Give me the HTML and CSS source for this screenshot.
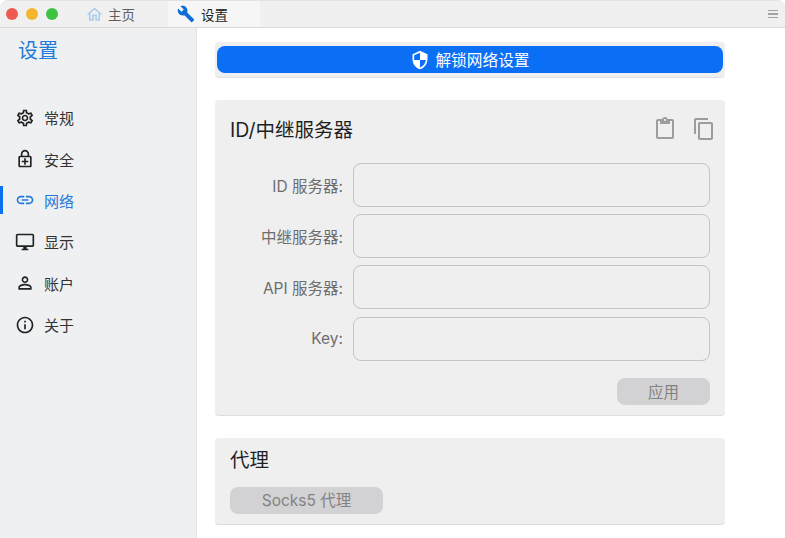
FILE: index.html
```html
<!DOCTYPE html>
<html lang="zh-CN">

<head>
    <meta charset="UTF-8">
    <meta name="viewport" content="width=device-width, initial-scale=1.0">
    <title>设置</title>

    <link rel="stylesheet" href="styles.css">
</head>

<body>

    <header class="titlebar">
        <div class="lights">
            <span class="light red"></span>
            <span class="light yellow"></span>
            <span class="light green"></span>
        </div>
        <div class="tab tab-home">
            <svg class="tab-icon-home" viewBox="0 0 24 24"><path d="M12 5.69l5 4.5V18h-2v-6H9v6H7v-7.81l5-4.5M12 3L2 12h3v8h6v-6h2v6h6v-8h3L12 3z"/></svg>
            主页
        </div>
        <div class="tab tab-active">
            <svg class="tab-icon-tool" viewBox="0 0 24 24"><path d="M22.7 19l-9.1-9.1c.9-2.3.4-5-1.5-6.9-2-2-5-2.4-7.4-1.3L9 6 6 9 1.6 4.7C.4 7.1.9 10.1 2.9 12.1c1.9 1.9 4.6 2.4 6.9 1.5l9.1 9.1c.4.4 1 .4 1.4 0l2.3-2.3c.5-.4.5-1.1.1-1.4z"/></svg>
            设置
        </div>
        <div class="menu">
            <span></span>
            <span></span>
            <span></span>
        </div>
    </header>

    <div class="content">
        <aside class="sidebar">
            <h1>设置</h1>
            <nav>
                <a class="nav-item">
                    <svg viewBox="0 0 24 24"><path d="M19.43 12.98c.04-.32.07-.64.07-.98 0-.34-.03-.66-.07-.98l2.11-1.65c.19-.15.24-.42.12-.64l-2-3.46c-.09-.16-.26-.25-.44-.25-.06 0-.12.01-.17.03l-2.49 1c-.52-.4-1.08-.73-1.69-.98l-.38-2.65C14.46 2.18 14.25 2 14 2h-4c-.25 0-.46.18-.49.42l-.38 2.65c-.61.25-1.17.59-1.69.98l-2.49-1c-.06-.02-.12-.03-.18-.03-.17 0-.34.09-.43.25l-2 3.46c-.13.22-.07.49.12.64l2.11 1.65c-.04.32-.07.65-.07.98 0 .33.03.66.07.98l-2.11 1.65c-.19.15-.24.42-.12.64l2 3.46c.09.16.26.25.44.25.06 0 .12-.01.17-.03l2.49-1c.52.4 1.08.73 1.69.98l.38 2.65c.03.24.24.42.49.42h4c.25 0 .46-.18.49-.42l.38-2.65c.61-.25 1.17-.59 1.69-.98l2.49 1c.06.02.12.03.18.03.17 0 .34-.09.43-.25l2-3.46c.12-.22.07-.49-.12-.64l-2.11-1.65zm-1.98-1.71c.04.31.05.52.05.73 0 .21-.02.43-.05.73l-.14 1.13.89.7 1.08.84-.7 1.21-1.27-.51-1.04-.42-.9.68c-.43.32-.84.56-1.25.73l-1.06.43-.16 1.13-.2 1.35h-1.4l-.19-1.35-.16-1.13-1.06-.43c-.43-.18-.83-.41-1.23-.71l-.91-.7-1.06.43-1.27.51-.7-1.21 1.08-.84.89-.7-.14-1.13c-.03-.31-.05-.54-.05-.74s.02-.43.05-.73l.14-1.13-.89-.7-1.08-.84.7-1.21 1.27.51 1.04.42.9-.68c.43-.32.84-.56 1.25-.73l1.06-.43.16-1.13.2-1.35h1.39l.19 1.35.16 1.13 1.06.43c.43.18.83.41 1.23.71l.91.7 1.06-.43 1.27-.51.7 1.21-1.07.85-.89.7.14 1.13zM12 8c-2.21 0-4 1.79-4 4s1.79 4 4 4 4-1.79 4-4-1.79-4-4-4zm0 6c-1.1 0-2-.9-2-2s.9-2 2-2 2 .9 2 2-.9 2-2 2z"/></svg>
                    常规
                </a>
                <a class="nav-item">
                    <svg viewBox="0 0 24 24"><path d="M18 8h-1V6c0-2.76-2.24-5-5-5S7 3.24 7 6v2H6c-1.1 0-2 .9-2 2v10c0 1.1.9 2 2 2h12c1.1 0 2-.9 2-2V10c0-1.1-.9-2-2-2zM9 6c0-1.66 1.34-3 3-3s3 1.34 3 3v2H9V6zm9 14H6V10h12v10zm-2-4h-3v3h-2v-3H8v-2h3v-3h2v3h3v2z"/></svg>
                    安全
                </a>
                <a class="nav-item active">
                    <svg viewBox="0 0 24 24"><path d="M3.9 12c0-1.71 1.39-3.1 3.1-3.1h4V7H7c-2.76 0-5 2.24-5 5s2.24 5 5 5h4v-1.9H7c-1.71 0-3.1-1.39-3.1-3.1zM8 13h8v-2H8v2zm9-6h-4v1.9h4c1.71 0 3.1 1.39 3.1 3.1s-1.39 3.1-3.1 3.1h-4V17h4c2.76 0 5-2.24 5-5s-2.24-5-5-5z"/></svg>
                    网络
                </a>
                <a class="nav-item">
                    <svg viewBox="0 0 24 24"><path d="M21 2H3c-1.1 0-2 .9-2 2v12c0 1.1.9 2 2 2h7v2H8v2h8v-2h-2v-2h7c1.1 0 2-.9 2-2V4c0-1.1-.9-2-2-2zm0 14H3V4h18v12z"/></svg>
                    显示
                </a>
                <a class="nav-item">
                    <svg viewBox="0 0 24 24"><path d="M12 5.9c1.16 0 2.1.94 2.1 2.1s-.94 2.1-2.1 2.1S9.9 9.16 9.9 8s.94-2.1 2.1-2.1m0 9c2.97 0 6.1 1.46 6.1 2.1v1.1H5.9V17c0-.64 3.13-2.1 6.1-2.1M12 4C9.79 4 8 5.79 8 8s1.79 4 4 4 4-1.79 4-4-1.79-4-4-4zm0 9c-2.67 0-8 1.34-8 4v3h16v-3c0-2.66-5.33-4-8-4z"/></svg>
                    账户
                </a>
                <a class="nav-item">
                    <svg viewBox="0 0 24 24"><path d="M11 7h2v2h-2zm0 4h2v6h-2zm1-9C6.48 2 2 6.48 2 12s4.48 10 10 10 10-4.48 10-10S17.52 2 12 2zm0 18c-4.41 0-8-3.59-8-8s3.59-8 8-8 8 3.59 8 8-3.59 8-8 8z"/></svg>
                    关于
                </a>
            </nav>
        </aside>

        <main class="settings">
            <div class="unlock-wrap">
                <button class="unlock" type="button">
                    <svg viewBox="0 0 24 24"><path d="M12 1L3 5v6c0 5.55 3.84 10.74 9 12 5.16-1.26 9-6.45 9-12V5l-9-4zm0 10.99h7c-.53 4.12-3.28 7.79-7 8.94V12H5V6.3l7-3.11v8.8z"/></svg>
                    解锁网络设置
                </button>
            </div>

            <section class="card card-server">
                <div class="card-head">
                    <h2>ID/中继服务器</h2>
                    <div class="card-tools">
                        <svg viewBox="0 0 24 24"><path d="M19 2h-4.18C14.4.84 13.3 0 12 0c-1.3 0-2.4.84-2.82 2H5c-1.1 0-2 .9-2 2v16c0 1.1.9 2 2 2h14c1.1 0 2-.9 2-2V4c0-1.1-.9-2-2-2zm-7 0c.55 0 1 .45 1 1s-.45 1-1 1-1-.45-1-1 .45-1 1-1zm7 18H5V4h2v3h10V4h2v16z"/></svg>
                        <svg viewBox="0 0 24 24"><path d="M16 1H4c-1.1 0-2 .9-2 2v14h2V3h12V1zm3 4H8c-1.1 0-2 .9-2 2v14c0 1.1.9 2 2 2h11c1.1 0 2-.9 2-2V7c0-1.1-.9-2-2-2zm0 16H8V7h11v14z"/></svg>
                    </div>
                </div>
                <div class="field">
                    <label for="id-server">ID 服务器:</label>
                    <input id="id-server" type="text" disabled>
                </div>
                <div class="field">
                    <label for="relay-server">中继服务器:</label>
                    <input id="relay-server" type="text" disabled>
                </div>
                <div class="field">
                    <label for="api-server">API 服务器:</label>
                    <input id="api-server" type="text" disabled>
                </div>
                <div class="field">
                    <label for="key">Key:</label>
                    <input id="key" type="text" disabled>
                </div>
                <div class="card-foot">
                    <button class="btn-off btn-apply" type="button" disabled>应用</button>
                </div>
            </section>

            <section class="card card-proxy">
                <h2>代理</h2>
                <button class="btn-off btn-socks" type="button" disabled>Socks5 代理</button>
            </section>
        </main>
    </div>

</body>

</html>
```

FILE: styles.css
```css
* {
    box-sizing: border-box;
    margin: 0;
    padding: 0;
}

html,
body {
    height: 100%;
    overflow: hidden;
}

body {
    display: flex;
    flex-direction: column;
    background: white;
    color: #2b2b2b;
    font-family: Inter, "Noto Sans CJK SC", sans-serif;
}

.titlebar {
    flex: none;
    height: 28px;
    display: flex;
    align-items: center;
    background: #f0f0f1;
    border-top: 1px solid #e2e2e2;
    border-bottom: 1px solid #d9d9d9;
    border-radius: 8px 8px 0 0;
    font-size: 13.5px;
}

.lights {
    width: 85px;
    display: flex;
    gap: 8px;
    padding-left: 6px;
}

.light {
    width: 12px;
    height: 12px;
    border-radius: 50%;
}

.red {
    background: #ee5a52;
}

.yellow {
    background: #f6b52e;
}

.green {
    background: #3dc244;
}

.tab {
    height: 100%;
    display: flex;
    align-items: center;
}

.tab-home {
    width: 83px;
    gap: 4px;
    color: #5e5e5e;
}

.tab-icon-home {
    width: 19px;
    height: 19px;
    fill: #a9cdeb;
}

.tab-active {
    width: 92px;
    gap: 6px;
    padding-left: 9px;
    background: #f6f6f7;
    color: #222;
}

.tab-icon-tool {
    width: 18px;
    height: 18px;
    fill: #0f6fd6;
}

.menu {
    margin-left: auto;
    margin-right: 7px;
    display: flex;
    flex-direction: column;
    gap: 2px;
}

.menu span {
    display: block;
    width: 10px;
    height: 1.5px;
    background: #a3a3a3;
}

.content {
    flex: 1;
    display: flex;
    min-height: 0;
}

.sidebar {
    flex: none;
    width: 197px;
    background: #eff0f2;
    border-right: 1px solid #e3e3e5;
}

.sidebar h1 {
    height: 69px;
    padding: 8px 0 0 18px;
    color: #1f7ad9;
    font-size: 20px;
    font-weight: 400;
    line-height: 30px;
}

.nav-item {
    height: 41.4px;
    display: flex;
    align-items: center;
    gap: 9px;
    padding-left: 15px;
    font-size: 15px;
    color: #333;
}

.nav-item svg {
    width: 20px;
    height: 20px;
    fill: #222;
}

.nav-item.active {
    color: #1f7ad9;
    background: linear-gradient(#0a6ff0, #0a6ff0) no-repeat left center / 3px 28px;
}

.nav-item.active svg {
    fill: #1f7ad9;
}

.settings {
    flex: 1;
    padding: 14px 0 0 18px;
    min-width: 0;
}

.unlock-wrap {
    width: 510px;
    height: 36px;
    padding: 4px 2px;
    background: #efeff0;
    border-bottom: 1px solid #e0e0e0;
    border-radius: 4px;
}

.unlock {
    width: 100%;
    height: 27px;
    display: flex;
    align-items: center;
    justify-content: center;
    gap: 5px;
    border: none;
    border-radius: 8px;
    background: #0a6ff5;
    color: white;
    font-family: inherit;
    font-size: 15.7px;
}

.unlock svg {
    width: 20px;
    height: 20px;
    fill: white;
}

.card {
    width: 510px;
    background: #efeff0;
    border-bottom: 1px solid #dedede;
    border-radius: 4px;
}

.card-server {
    height: 316px;
    margin-top: 22px;
    padding: 0 15px;
}

.card-head {
    height: 63px;
    display: flex;
    align-items: center;
    justify-content: space-between;
}

.card h2 {
    font-size: 19.5px;
    font-weight: 400;
    color: #1f1f1f;
}

.card-head h2 {
    margin-top: -7px;
}

.card-tools {
    display: flex;
    gap: 15px;
    margin: -6px -6px 0 0;
}

.card-tools svg {
    width: 24px;
    height: 24px;
    fill: #9c9c9c;
}

.field {
    height: 44px;
    margin-bottom: 7.2px;
    display: flex;
    align-items: center;
    gap: 10px;
}

.field label {
    width: 113px;
    text-align: right;
    font-size: 15.5px;
    color: #6d6d6d;
}

.field input {
    flex: 1;
    min-width: 0;
    height: 100%;
    background: transparent;
    border: 1px solid #c4c4c6;
    border-radius: 8px;
}

.card-foot {
    display: flex;
    justify-content: flex-end;
    margin-top: 17px;
}

.btn-off {
    height: 27px;
    border: none;
    border-radius: 8px;
    background: #d2d2d4;
    color: #828282;
    font-family: inherit;
    font-size: 15.5px;
}

.btn-apply {
    width: 93px;
}

.card-proxy {
    height: 87px;
    margin-top: 22px;
    padding: 8px 15px 0;
}

.card-proxy h2 {
    height: 41px;
    line-height: 29px;
}

.btn-socks {
    display: block;
    width: 153px;
    padding-bottom: 3px;
}
```
